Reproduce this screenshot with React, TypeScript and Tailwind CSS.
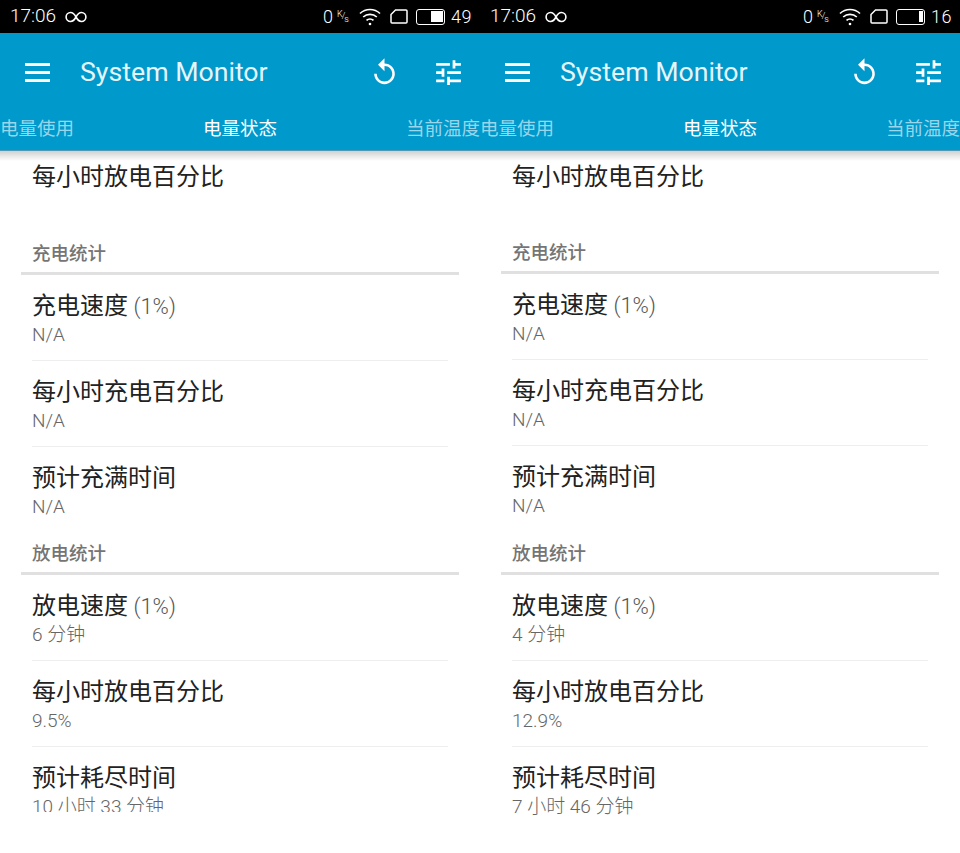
import React from 'react'

const font = "font-['Roboto','Noto_Sans_CJK_SC',sans-serif]"

function MenuIcon() {
  return (
    <div className="flex flex-col gap-[5px] w-[25px]">
      <div className="h-[3px] bg-white"></div>
      <div className="h-[3px] bg-white"></div>
      <div className="h-[3px] bg-white"></div>
    </div>
  )
}

function ReplayIcon() {
  return (
    <svg width="31" height="31" viewBox="0 0 24 24" fill="white">
      <path d="M12 5V1L7 6l5 5V7c3.31 0 6 2.69 6 6s-2.69 6-6 6-6-2.69-6-6H4c0 4.42 3.58 8 8 8s8-3.58 8-8-3.58-8-8-8z" />
    </svg>
  )
}

function TuneIcon() {
  return (
    <svg width="33" height="33" viewBox="0 0 24 24" fill="white">
      <path d="M3 17v2h6v-2H3zM3 5v2h10V5H3zm10 16v-2h8v-2h-8v-2h-2v6h2zM7 9v2H3v2h4v2h2V9H7zm14 4v-2H11v2h10zm-6-4h2V7h4V5h-4V3h-2v6z" />
    </svg>
  )
}

function LoopIcon() {
  return (
    <svg width="22" height="12" viewBox="0 0 22 12" fill="none" stroke="white" strokeWidth="1.6">
      <path d="M11 6C9.5 3.2 7.8 1.5 5.6 1.5a4.5 4.5 0 0 0 0 9c2.2 0 3.9-1.7 5.4-4.5s3.2-4.500 5.400-4.500a4.500 4.500 0 0 1 0 9c-2.200 0-3.900-1.700-5.400-4.500z" />
    </svg>
  )
}

function WifiIcon() {
  return (
    <svg width="22" height="18" viewBox="0 0 22 18" fill="none" stroke="white" strokeWidth="1.7">
      <path d="M1 5.500a14.500 14.500 0 0 1 20 0" />
      <path d="M4.200 9a10 10 0 0 1 13.600 0" />
      <path d="M7.500 12.400a5.200 5.200 0 0 1 7 0" />
      <circle cx="11" cy="16" r="1.300" fill="white" stroke="none" />
    </svg>
  )
}

function SimIcon() {
  return (
    <svg width="18" height="15" viewBox="0 0 18 15" fill="none" stroke="white" strokeWidth="1.500">
      <path d="M5.500 1H16a1 1 0 0 1 1 1v11a1 1 0 0 1-1 1H2a1 1 0 0 1-1-1V5.500z" />
    </svg>
  )
}

function BatteryIcon({ fillClass }: { fillClass: string }) {
  return (
    <div className="w-[29px] h-[16px] border-[1.5px] border-white rounded-[3px] flex justify-end items-stretch p-[1.5px]">
      <div className={`bg-white ${fillClass}`}></div>
    </div>
  )
}

function Row({ title, note, sub, last }: { title: string; note?: string; sub: string; last?: boolean }) {
  return (
    <div className={`pt-[15px] ml-[32px] mr-[32px] ${last ? '' : 'pb-[13px] border-b border-[#eeeeee]'}`}>
      <div className="text-[24px] leading-[32px] text-[#222222]">
        {title}
        {note && <span className="text-[22px] leading-none text-[#555555] font-light"> {note}</span>}
      </div>
      <div className="mt-[1px] text-[19px] leading-[24px] text-[#666666] font-light">{sub}</div>
    </div>
  )
}

function SectionHead({ title }: { title: string }) {
  return (
    <div className="mx-[21px] border-b-[3px] border-[#e0e0e0] pl-[11px] pb-[6px]">
      <div className="text-[18.5px] leading-[24px] font-medium text-[#757575]">{title}</div>
    </div>
  )
}

type PhoneProps = {
  battery: string
  batteryFill: string
  speed: string
  hourly: string
  remaining: string
  listHeight: string
  firstGap: string
  secondGap: string
}

function Phone({ battery, batteryFill, speed, hourly, remaining, listHeight, firstGap, secondGap }: PhoneProps) {
  return (
    <div className="w-[480px] shrink-0">
      <div className="h-[33px] bg-black text-white flex items-center pl-[10px] pr-[8px]">
        <span className="text-[19px] font-light">17:06</span>
        <span className="ml-[9px] flex"><LoopIcon /></span>
        <div className="ml-auto flex items-center">
          <span className="text-[18px] font-light">0</span>
          <span className="ml-[4px] mr-[10px] flex items-start w-[12px] h-[14px] text-[9px] leading-none font-light">
            <span>K</span>
            <span className="mt-[2px] -ml-[1px]">/</span>
            <span className="mt-[5px] -ml-[1px]">s</span>
          </span>
          <WifiIcon />
          <span className="ml-[9px] mr-[8px] flex"><SimIcon /></span>
          <BatteryIcon fillClass={batteryFill} />
          <span className="ml-[6px] text-[18px] font-light tracking-[0.5px]">{battery}</span>
        </div>
      </div>

      <div className="relative z-10 h-[118px] bg-[#0099cc] border-b border-[#66bbdd]">
        <div className="h-[78px] flex items-center pl-[25px] pr-[15px]">
          <MenuIcon />
          <div className="ml-[30px] text-[26.7px] text-[#e6f5fa]">System Monitor</div>
          <div className="ml-auto flex items-center gap-[32px]">
            <ReplayIcon />
            <TuneIcon />
          </div>
        </div>
        <div className="mt-[6px] flex justify-between text-[18.5px] leading-[24px] text-[#99d6eb]">
          <span>电量使用</span>
          <span className="text-white">电量状态</span>
          <span>当前温度</span>
        </div>
        <div className="absolute top-full inset-x-0 h-[11px] bg-gradient-to-b from-black/20 to-transparent"></div>
      </div>

      <div className={`overflow-hidden ${listHeight}`}>
        <div className="pt-[10px] pl-[32px] text-[24px] leading-[32px] text-[#222222]">每小时放电百分比</div>
        <div className={firstGap}>
          <SectionHead title="充电统计" />
        </div>
        <Row title="充电速度" note="(1%)" sub="N/A" />
        <Row title="每小时充电百分比" sub="N/A" />
        <Row title="预计充满时间" sub="N/A" last />
        <div className={secondGap}>
          <SectionHead title="放电统计" />
        </div>
        <Row title="放电速度" note="(1%)" sub={speed} />
        <Row title="每小时放电百分比" sub={hourly} />
        <Row title="预计耗尽时间" sub={remaining} last />
      </div>
    </div>
  )
}

export default function App() {
  return (
    <div className={`${font} w-[960px] h-[853px] bg-white flex overflow-hidden`}>
      <Phone
        battery="49"
        batteryFill="w-[12px]"
        speed="6 分钟"
        hourly="9.5%"
        remaining="10 小时 33 分钟"
        listHeight="h-[661px]"
        firstGap="mt-[49px]"
        secondGap="mt-[23px]"
      />
      <Phone
        battery="16"
        batteryFill="w-[4px]"
        speed="4 分钟"
        hourly="12.9%"
        remaining="7 小时 46 分钟"
        listHeight="h-[668px]"
        firstGap="mt-[48px]"
        secondGap="mt-[24px]"
      />
    </div>
  )
}
